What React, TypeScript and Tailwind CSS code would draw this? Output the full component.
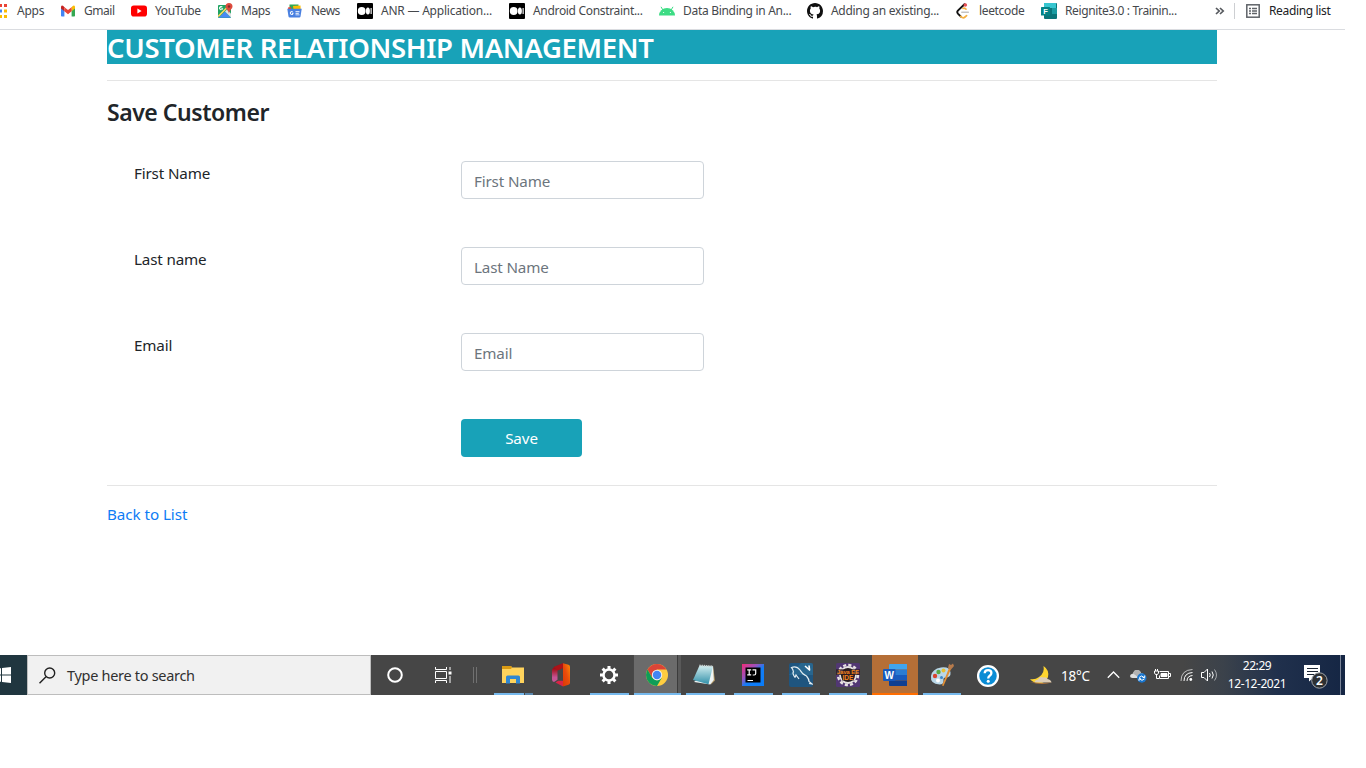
import type { ReactNode } from "react";

function GmailIcon() {
  return (
    <svg width="15" height="12" viewBox="0 0 15 12" className="ml-px">
      <path d="M0 1.500v9.300q0 .7.800.7h2.600V4.600z" fill="#4285f4" />
      <path d="M14 1.500v9.300q0 .7-.8.7h-2.600V4.600z" fill="#34a853" />
      <path d="M0 1.600v1.900l3.400 2.800V2.200L2.300.9Q.6-.1 0 1.600z" fill="#c5221f" />
      <path d="M14 1.600v1.900l-3.400 2.800V2.200l1.100-1.300Q13.400-.1 14 1.600z" fill="#fbbc04" />
      <path d="M3.400 2.200L7 5.100l3.600-2.900v4.100L7 9.300 3.400 6.300z" fill="#ea4335" />
    </svg>
  );
}

function YouTubeIcon() {
  return (
    <svg width="16" height="12" viewBox="0 0 16 12">
      <rect y=".4" width="16" height="11.200" rx="2.800" fill="#f00" />
      <path d="M6.400 3.500v5L10.600 6z" fill="#fff" />
    </svg>
  );
}

function MapsIcon() {
  return (
    <svg width="16" height="16" viewBox="0 0 16 16" className="ml-px">
      <rect x="0" y="2" width="13" height="13" rx="1" fill="#1ea362" />
      <path d="M.5 14.800L7 8.500l6 6.300z" fill="#4a89f3" />
      <path d="M7 8.500l2-2 4 4v4z" fill="#dfe3e4" />
      <path d="M0 12.500L10.500 2h2L.6 14.200z" fill="#ffd75e" />
      <path d="M5.200 5.200H3.300v1h.9a1.100 1.100 0 1 1-.2-1.700l.7-.7a2.100 2.100 0 1 0 .5 1.400z" fill="#fff" />
      <path d="M11 0a3.500 3.500 0 0 0-3.500 3.500c0 2.500 3 3.400 3.500 7.200.5-3.800 3.500-4.700 3.500-7.200A3.500 3.500 0 0 0 11 0z" fill="#dd4b3e" />
      <circle cx="11" cy="3.500" r="1.200" fill="#822f2b" />
    </svg>
  );
}

function NewsIcon() {
  return (
    <svg width="15" height="14" viewBox="0 0 15 14">
      <rect x="2.500" y=".5" width="9" height="6" fill="#34a853" />
      <path d="M6 2l7.500-.4.300 5-7 .6z" fill="#fbbc04" />
      <path d="M1 3.600l3-.5.500 3-3 1z" fill="#ea4335" />
      <path d="M.3 4.800h14.400l-1.200 7.700q-.2 1-1.200 1H2.700q-1 0-1.200-1z" fill="#4a80e0" />
      <path d="M6.600 8.800H5v.9h.6a1 1 0 1 1-.2-1.500l.6-.6a1.900 1.900 0 1 0 .6 1.200zM8.500 7.300h4v1h-4zM8.500 9h3.300v.8H8.500zM8.500 10.500h4v.8h-4z" fill="#fff" />
    </svg>
  );
}

function MediumIcon() {
  return (
    <svg width="16" height="16" viewBox="0 0 16 16">
      <rect width="16" height="16" rx="1" fill="#000" />
      <circle cx="4.700" cy="8" r="3.900" fill="#fff" />
      <ellipse cx="10.900" cy="8" rx="2" ry="3.500" fill="#fff" />
      <rect x="13.500" y="5" width="1.300" height="6" fill="#ddd" />
    </svg>
  );
}

function AndroidIcon() {
  return (
    <svg width="16" height="10" viewBox="0 0 16 10">
      <path d="M0 9.500A8 7.500 0 0 1 16 9.500z" fill="#3ddc84" />
      <path d="M2 .8l2 3.400M14 .8l-2 3.400" stroke="#3ddc84" strokeWidth="1" />
      <circle cx="4.600" cy="6.500" r=".6" fill="#fff" />
      <circle cx="11.400" cy="6.500" r=".6" fill="#fff" />
    </svg>
  );
}

function GithubIcon() {
  return (
    <svg width="16" height="16" viewBox="0 0 16 16">
      <path
        fill="#101010"
        d="M8 0C3.580 0 0 3.580 0 8c0 3.540 2.290 6.530 5.470 7.590.4.070.55-.17.55-.38 0-.19-.01-.82-.01-1.490-2.010.37-2.530-.49-2.690-.94-.09-.23-.48-.94-.82-1.130-.28-.15-.68-.52-.01-.53.63-.01 1.080.58 1.230.82.72 1.210 1.870.87 2.330.66.07-.52.28-.87.51-1.070-1.780-.2-3.640-.89-3.640-3.950 0-.87.31-1.590.82-2.150-.08-.2-.36-1.020.08-2.120 0 0 .67-.21 2.200.82A7.600 7.600 0 0 1 8 3.860c.68 0 1.360.09 2 .27 1.530-1.040 2.200-.82 2.200-.82.44 1.100.16 1.920.08 2.120.51.56.82 1.270.82 2.150 0 3.070-1.870 3.750-3.650 3.950.29.25.54.73.54 1.480 0 1.070-.01 1.930-.01 2.200 0 .21.15.46.55.38A8 8 0 0 0 16 8c0-4.420-3.580-8-8-8z"
      />
    </svg>
  );
}

function LeetcodeIcon() {
  return (
    <svg width="16" height="16" viewBox="0 0 16 16" fill="none" strokeLinecap="round">
      <path d="M9.500 1.200L2.900 7.600q-1.300 1.500 0 3l3 3" stroke="#111" strokeWidth="1.900" />
      <path d="M5.600 13.300q2.300 2.600 4.400.7l1.600-1.400M8 5.400q1.300-.6 3 .8" stroke="#f5b041" strokeWidth="1.700" />
      <path d="M6.800 9.300h6.500" stroke="#c3c3c3" strokeWidth="1.500" />
      <circle cx="10.300" cy="2" r="1.800" fill="#e84f55" />
    </svg>
  );
}

function FormsIcon() {
  return (
    <svg width="16" height="16" viewBox="0 0 16 16">
      <rect x="3" width="13" height="16" rx="1" fill="#0b7478" />
      <path d="M3 0h12v5H3z" fill="#37c6d0" />
      <path d="M11 5h5v6h-5z" fill="#1a9ba1" />
      <rect y="4" width="9" height="8.500" rx=".6" fill="#038387" />
      <text x="2.300" y="11" fontFamily="Liberation Sans" fontWeight="700" fontSize="7.500" fill="#fff">F</text>
    </svg>
  );
}

function ReadingIcon() {
  return (
    <svg width="14" height="14" viewBox="0 0 14 14" fill="none" stroke="#5f6368">
      <rect x=".8" y=".8" width="12.400" height="12.400" strokeWidth="1.500" />
      <path d="M3 4.500h2M3 7h2M3 9.500h2M6 4.500h5M6 7h5M6 9.500h5" strokeWidth="1.300" />
    </svg>
  );
}

type Bookmark = { icon: ReactNode; label: string; width: string; tracking: string };

const bookmarks: Bookmark[] = [
  { icon: <GmailIcon />, label: "Gmail", width: "w-[71px]", tracking: "tracking-[-0.45px]" },
  { icon: <YouTubeIcon />, label: "YouTube", width: "w-[87px]", tracking: "tracking-[-0.4px]" },
  { icon: <MapsIcon />, label: "Maps", width: "w-[69px] -ml-px mr-px", tracking: "tracking-[-0.4px]" },
  { icon: <NewsIcon />, label: "News", width: "w-[70px]", tracking: "tracking-[-0.5px]" },
  { icon: <MediumIcon />, label: "ANR — Application...", width: "w-[152px]", tracking: "tracking-[-0.22px]" },
  { icon: <MediumIcon />, label: "Android Constraint...", width: "w-[150px]", tracking: "tracking-[-0.32px]" },
  { icon: <AndroidIcon />, label: "Data Binding in An...", width: "w-[148px]", tracking: "tracking-[-0.3px]" },
  { icon: <GithubIcon />, label: "Adding an existing...", width: "w-[148px]", tracking: "tracking-[-0.3px]" },
  { icon: <LeetcodeIcon />, label: "leetcode", width: "w-[86px]", tracking: "tracking-[-0.35px]" },
  { icon: <FormsIcon />, label: "Reignite3.0 : Trainin...", width: "w-[174px]", tracking: "tracking-[-0.38px]" },
];

function BookmarkBar() {
  return (
    <nav className="flex h-[30px] w-[1345px] items-start overflow-hidden border-b border-[#dadce0] text-[12px] leading-[22px] whitespace-nowrap text-[#45484c]">
      <div className="flex h-[22px] w-[60px] shrink-0 items-center">
        <svg width="17" height="14" viewBox="0 0 17 14">
          <path d="M0 0h2v3H0zM4 0h3v3H4z" fill="#ea4335" />
          <path d="M0 5.500h2v3H0z" fill="#4285f4" />
          <path d="M4 5.500h3v3H4zM4 11h3v3H4zM0 11h2v3H0z" fill="#fbbc04" />
        </svg>
        <span className="tracking-[-0.25px]">Apps</span>
      </div>
      {bookmarks.map((b) => (
        <a key={b.label} className={`flex h-[22px] shrink-0 items-center ${b.width}`}>
          <span className="flex w-6 shrink-0">{b.icon}</span>
          <span className={b.tracking}>{b.label}</span>
        </a>
      ))}
      <svg className="mt-[7px] shrink-0" width="19" height="9" viewBox="0 0 19 9" fill="none" stroke="#55585d" strokeWidth="1.700">
        <path d="M1 1l3.200 3L1 7M5 1l3.200 3L5 7" />
      </svg>
      <div className="mt-[3px] mr-[11px] h-4 w-px shrink-0 bg-[#cdcfd2]" />
      <div className="flex h-[22px] shrink-0 items-center gap-[9px] text-[#202124]">
        <ReadingIcon />
        <span className="tracking-[-0.35px]">Reading list</span>
      </div>
    </nav>
  );
}

function Field({ label, placeholder }: { label: string; placeholder: string }) {
  return (
    <div className="flex h-[86px] items-start">
      <label className="w-[327px] text-[15.200px] leading-6 tracking-[-0.150px]">{label}</label>
      <input
        placeholder={placeholder}
        className="h-[38px] w-[243px] rounded-[4px] border border-[#ced4da] px-[12px] pt-px text-[15.200px] tracking-[-0.150px] outline-none placeholder:text-[#6c757d]"
      />
    </div>
  );
}

function ExplorerIcon() {
  return (
    <svg width="22" height="20" viewBox="0 0 22 20">
      <path d="M0 1h9l1 1.500h12V18H0z" fill="#ffd35c" />
      <path d="M0 1h9l1 1.500L9 4H0z" fill="#d99a13" />
      <path d="M4 18.500V12q0-1.500 1.500-1.500h11Q18 10.500 18 12v6.500h-4V14H8v4.500z" fill="#3087d2" />
      <path d="M8 14h6v4H8z" fill="#ffd35c" />
    </svg>
  );
}

function OfficeIcon() {
  return (
    <svg width="18" height="24" viewBox="0 0 18 24">
      <defs>
        <linearGradient id="officeArm" x1="0" y1="0" x2="0" y2="1">
          <stop offset=".3" stopColor="#a30f18" />
          <stop offset=".75" stopColor="#c75495" />
        </linearGradient>
        <linearGradient id="officePanel" x1="1" y1="0" x2="0" y2="1">
          <stop offset="0" stopColor="#f98b0b" />
          <stop offset=".5" stopColor="#e84b0c" />
          <stop offset="1" stopColor="#dc3a04" />
        </linearGradient>
      </defs>
      <path d="M0 6.500L2 4l9-3.800v4.900L5.500 7.500v9.300L2 19q-2-.5-2-2.500z" fill="url(#officeArm)" />
      <path d="M2 4l9-3.800v4.900L5.500 7.500z" fill="#ac1318" />
      <path d="M3.500 19.500l2.500-1.700h5v5.700z" fill="#d92446" />
      <path d="M11 .2l5.500 1.600q1.500.5 1.500 2v16q0 1.500-1.500 2L11 23.500z" fill="url(#officePanel)" />
    </svg>
  );
}

function SettingsIcon() {
  return (
    <svg width="20" height="20" viewBox="0 0 20 20" fill="none" stroke="#fff">
      <circle cx="10" cy="10" r="5.500" strokeWidth="2.500" />
      <path d="M10 1v3M10 16v3M1 10h3M16 10h3M3.600 3.600l2.200 2.200M14.200 14.200l2.200 2.200M16.400 3.600l-2.200 2.200M5.800 14.200l-2.200 2.200" strokeWidth="3" />
    </svg>
  );
}

function ChromeIcon() {
  return (
    <svg width="22" height="22" viewBox="0 0 22 22" className="-ml-px">
      <circle cx="11" cy="11" r="11" fill="#ffcd40" />
      <path d="M1.500 5.500A11 11 0 0 1 20.500 5.500H11L6.200 13.700z" fill="#db4437" />
      <path d="M1.500 5.500A11 11 0 0 0 11 22l4.800-8.200L11 16.500l-4.800-2.800z" fill="#0f9d58" />
      <circle cx="11" cy="11" r="5.200" fill="#f1f1f1" />
      <circle cx="11" cy="11" r="4.200" fill="#4285f4" />
    </svg>
  );
}

function NotepadIcon() {
  return (
    <svg width="24" height="24" viewBox="0 0 24 24" className="-ml-0.5">
      <defs>
        <linearGradient id="note" x1="0" y1="0" x2="0" y2="1">
          <stop offset="0" stopColor="#d3eef0" />
          <stop offset="1" stopColor="#3190a9" />
        </linearGradient>
      </defs>
      <path d="M21 2.500l2 15-4 4z" fill="#ad935f" />
      <path d="M21 3l.8 14-3.500 4.500L2 19z" fill="#eef4f4" />
      <path d="M7.500 2.500L21 3.300l-4.500 18L1 17z" fill="url(#note)" />
      <path d="M7.500 2.500l13.500.8" stroke="#c8d1d0" strokeWidth="1.800" strokeDasharray="1.200 1" />
    </svg>
  );
}

function IntellijIcon() {
  return (
    <svg width="22" height="22" viewBox="0 0 22 22">
      <defs>
        <linearGradient id="idea" x1="0" y1="0" x2="1" y2="1">
          <stop offset="0" stopColor="#f32c78" />
          <stop offset=".35" stopColor="#9a52bd" />
          <stop offset=".55" stopColor="#147df5" />
          <stop offset="1" stopColor="#087cfa" />
        </linearGradient>
      </defs>
      <rect width="22" height="22" fill="url(#idea)" />
      <rect x="3.500" y="3.500" width="15" height="15" fill="#000" />
      <path d="M5.200 5.800h4M7.200 5.800v5M5.200 10.800h4M10.500 5.800h3.200v3.700q0 1.500-1.500 1.500h-1.500M5.500 16.500H11" stroke="#fff" strokeWidth="1.200" fill="none" />
    </svg>
  );
}

function MysqlIcon() {
  return (
    <svg width="24" height="24" viewBox="0 0 24 24">
      <rect width="24" height="24" rx="2" fill="#1f557f" />
      <path d="M12 0h10q2 0 2 2v10H0z" fill="#2f7199" opacity=".6" />
      <path d="M6 14.500Q3 10 4.500 9 4 6 2.500 4.500q5-2 8.500 2.500 2.500 4.500 6.500 6 2.500 3 2.500 5.500l3 2.500-3-.5M6 14.500l1-2.500 3 4" stroke="#e3edf2" strokeWidth="1.200" fill="none" />
      <path d="M16 3l5 4.500M20 2.500l.5 4" stroke="#fff" strokeWidth="1.600" />
    </svg>
  );
}

function JavaEeIcon() {
  return (
    <svg width="28" height="24" viewBox="-2 0 28 24">
      <rect width="24" height="24" rx="1.500" fill="#513773" />
      <circle cx="12" cy="12" r="10" fill="none" stroke="#e6e2e2" strokeWidth="2.400" strokeDasharray="3.100 2.136" />
      <circle cx="12" cy="12" r="8" fill="#241c22" stroke="#e6e2e2" strokeWidth="1.800" />
      <path d="M0 6.300h24v5.700H0zM6 12h12v5.500H6z" fill="#2c1c20" opacity=".8" />
      <g fontFamily="Liberation Sans" fontWeight="700" fill="#f5851f">
        <text x="1" y="11.300" fontSize="6" textLength="22" lengthAdjust="spacingAndGlyphs">Java EE</text>
        <text x="6.500" y="17.300" fontSize="6.500" textLength="11" lengthAdjust="spacingAndGlyphs">IDE</text>
      </g>
    </svg>
  );
}

function WordIcon() {
  return (
    <svg width="24" height="22" viewBox="0 0 24 22">
      <path d="M6 1q0-1 1-1h17v5.500H6z" fill="#41a5ee" />
      <path d="M6 5.500h18V11H6z" fill="#2b7cd3" />
      <path d="M6 11h18v5.500H6z" fill="#185abd" />
      <path d="M6 16.500h18V22H7q-1 0-1-1z" fill="#103f91" />
      <rect y="5" width="12.500" height="12" rx="1" fill="#185abd" />
      <text x="1.400" y="14.500" fontFamily="Liberation Sans" fontWeight="700" fontSize="10" fill="#fff">W</text>
    </svg>
  );
}

function PaintIcon() {
  return (
    <svg width="24" height="24" viewBox="0 0 24 24">
      <path d="M1 13Q2 6 11 4.500q9-1 9.500 5 .5 5-5 5-2.500 0-2 3 .5 4-4 4Q0 21 1 13z" fill="#b9d7e8" />
      <circle cx="5" cy="13" r="2.200" fill="#d8432f" />
      <circle cx="8.500" cy="9" r="2.200" fill="#58a943" />
      <circle cx="13.500" cy="7.500" r="2" fill="#e8c034" />
      <circle cx="8" cy="17.500" r="2" fill="#fff" />
      <circle cx="11.500" cy="14.500" r="1.500" fill="#3b87c8" />
      <path d="M19 5l2 1-7.500 17-1.500-.5z" fill="#e28f35" />
      <path d="M18 5l1-4 2 1 2-1.500L24 3l-3 3.500z" fill="#b77b4c" />
    </svg>
  );
}

function HelpIcon() {
  return (
    <svg width="24" height="24" viewBox="0 0 24 24" className="mt-px">
      <circle cx="12" cy="12" r="9.900" fill="#0a8cd5" stroke="#fff" strokeWidth="2.300" />
      <path d="M8.700 9.300q0-3.100 3.400-3.100 3.300 0 3.300 2.800 0 1.500-1.700 2.700-1.500 1.100-1.500 2.700" stroke="#fff" strokeWidth="2.300" fill="none" />
      <circle cx="12.200" cy="17.200" r="1.500" fill="#fff" />
    </svg>
  );
}

type Task = { name: string; icon: ReactNode; cell: string; line: string };

const tasks: Task[] = [
  { name: "office", icon: <OfficeIcon />, cell: "w-12", line: "hidden" },
  { name: "settings", icon: <SettingsIcon />, cell: "w-12", line: "w-[39px] bg-[#76b9ed]" },
  { name: "chrome", icon: <ChromeIcon />, cell: "w-12 border-l border-[#484848] bg-[linear-gradient(90deg,#6b6b6b_43px,#3c3c3c_43px,#3c3c3c_44px,#595959_44px)]", line: "w-full bg-[#76b9ed]" },
  { name: "notepad", icon: <NotepadIcon />, cell: "w-12", line: "w-[39px] bg-[#76b9ed]" },
  { name: "intellij", icon: <IntellijIcon />, cell: "w-12", line: "w-[39px] bg-[#76b9ed]" },
  { name: "mysql", icon: <MysqlIcon />, cell: "w-12", line: "w-[38px] bg-[#76b9ed]" },
  { name: "javaee", icon: <JavaEeIcon />, cell: "w-[47px] pr-px", line: "w-[38px] bg-[#76b9ed]" },
  { name: "word", icon: <WordIcon />, cell: "w-[46px] bg-[#b56f37]", line: "w-full bg-[#ff6d00]" },
  { name: "paint", icon: <PaintIcon />, cell: "w-[47px]", line: "w-[38px] bg-[#76b9ed]" },
  { name: "help", icon: <HelpIcon />, cell: "w-[46px]", line: "hidden" },
];

function TaskButton({ task }: { task: Task }) {
  return (
    <div className={`flex h-10 shrink-0 flex-col items-center ${task.cell}`}>
      <div className="flex h-[38px] items-center pt-0.5">{task.icon}</div>
      <div className={`h-0.5 ${task.line}`} />
    </div>
  );
}

function SystemTray() {
  return (
    <div className="flex h-10 flex-1 items-center pl-[18px] text-white">
      <svg width="24" height="20" viewBox="0 0 24 20" className="shrink-0">
        <path d="M14.500 1q6 4 4.500 11-2 6-9 6-6 0-9-4 5 1 9-2 6-4 4.500-11z" fill="#ffd52e" />
        <path d="M5.500 17.500q0-2.500 3.500-3 1.500-3.500 5.500-2 3-1 4 1.500 3.500.5 4 3.500z" fill="#dccdb8" />
        <path d="M1 17q11 1.500 22 .5-11 3-22-.5z" fill="#b87837" />
      </svg>
      <span className="ml-2 w-[46px] shrink-0 pt-px text-[13.500px] leading-5 tracking-[-0.250px]">18°C</span>
      <svg width="13" height="8" viewBox="0 0 13 8" fill="none" stroke="#fff" strokeWidth="1.300" className="shrink-0">
        <path d="M.8 6.800L6.500 1l5.700 5.800" />
      </svg>
      <svg width="17" height="14" viewBox="0 0 17 14" className="mt-px ml-2.5 shrink-0">
        <path d="M2.500 9Q0 9 0 7t3-2.600Q4 1 7 1t4 3q3 .5 3 5z" fill="#e0e0e0" />
        <path d="M3 4.400Q4 1 7 1t4 3q2 0 3 2L8 8z" fill="#b3b3b3" />
        <circle cx="11.800" cy="9" r="4.700" fill="#1976cf" />
        <path d="M9.100 8.500q2.500-3 5 0M14.700 6.500v2h-2M14.500 9.800q-2.500 3-5 0M9 11.800v-2h2" stroke="#fff" strokeWidth="1" fill="none" />
      </svg>
      <svg width="17" height="12" viewBox="0 0 17 12" fill="none" stroke="#fff" className="ml-[7px] shrink-0">
        <path d="M5.500 2.500h9v7h-9v-3M15 4.500h1.500v3H15M1.500 0v2M3.500 0v2M.5 2h4v2L3.500 5.500h-2L.5 4zM2.500 5.500v4H5" />
        <path d="M7 4.500h6v3H7z" fill="#fff" />
      </svg>
      <svg width="14" height="14" viewBox="0 0 14 14" fill="none" stroke="#fff" className="ml-[9px] shrink-0">
        <path d="M1 13Q1 2 12.500 1.500" opacity=".65" />
        <path d="M4 13Q4 5 12.500 4.500M7 13Q7 8 12.500 7.500" />
        <circle cx="10.800" cy="11.500" r="1.400" fill="#fff" stroke="none" />
      </svg>
      <svg width="17" height="14" viewBox="0 0 17 14" fill="none" stroke="#fff" className="ml-[7px] shrink-0">
        <path d="M.5 4.500H3L6.500 1v12L3 9.500H.5zM8.500 5q1.500 2 0 4M11 3.500q2.500 3.500 0 7" />
        <path d="M13.500 1.500q4 5.500 0 11" opacity=".55" />
      </svg>
      <div className="ml-1 w-[70px] shrink-0 text-center text-[12px] leading-[18px] tracking-[-0.430px]">
        <div>22:29</div>
        <div>12-12-2021</div>
      </div>
      <svg width="26" height="26" viewBox="0 0 26 26" className="mt-1 ml-3 shrink-0">
        <path d="M0 1h16v13H9l-4 3.500V14H0z" fill="#fff" />
        <path d="M3 4.500h11M3 7.500h11M3 10.500h7" stroke="#1c2634" strokeWidth="1.200" />
        <circle cx="15.400" cy="16.500" r="7.700" fill="#2d3033" stroke="#a0a4a9" strokeWidth="1" />
        <text x="12" y="20.800" fontFamily="Noto Sans" fontWeight="600" fontSize="12" fill="#fff">2</text>
      </svg>
      <div className="mr-1 ml-auto h-10 w-px shrink-0 bg-[#7a8498]" />
    </div>
  );
}

function Taskbar() {
  return (
    <footer className="flex h-10 w-[1345px] overflow-hidden bg-[linear-gradient(90deg,#464646_0%,#464646_88%,#3b424b_91%,#20304c_95%,#152644_100%)]">
      <div className="flex w-[27px] shrink-0 items-center bg-[#20363f]">
        <svg width="11" height="16" viewBox="0 0 11 16" fill="#fff">
          <path d="M0 1.300l1-.1v6.300H0zM2 1.100l9-1.100v7.500H2zM0 8.500h1v6.300l-1-.1zM2 8.500h9V16l-9-1.100z" />
        </svg>
      </div>
      <div className="flex w-[344px] shrink-0 items-center border border-[#bdbdbd] bg-[#f1f1f1] pl-[11px] text-[14.500px] text-[#303030]">
        <svg width="17" height="17" viewBox="0 0 17 17" fill="none" stroke="#202020" strokeWidth="1.400">
          <circle cx="10.700" cy="6" r="5" />
          <path d="M7 9.700L.5 16.200" />
        </svg>
        <span className="ml-[11px] pt-px tracking-[-0.3px]">Type here to search</span>
      </div>
      <div className="flex w-12 shrink-0 items-center justify-center">
        <svg width="16" height="16" viewBox="0 0 16 16" fill="none" stroke="#fff" strokeWidth="2">
          <circle cx="8" cy="8" r="6.800" />
        </svg>
      </div>
      <div className="flex w-12 shrink-0 items-center justify-center">
        <svg width="17" height="16" viewBox="0 0 17 16" fill="none" stroke="#fff" className="-mt-px">
          <path d="M.5 0v2.500h11V0M.5 16v-2.500h11V16M.5 4.500h11v7H.5zM15 0v3M15 9v7" />
          <path d="M13.500 4.500h3v3h-3z" fill="#fff" stroke="none" />
        </svg>
      </div>
      <div className="flex w-[22px] shrink-0 items-center gap-0.5 pl-[6px]">
        <div className="h-4 w-px bg-[#707070]" />
        <div className="h-4 w-px bg-[#707070]" />
      </div>
      <div className="flex w-12 shrink-0 flex-col items-center">
        <div className="flex h-[38px] items-center pt-px"><ExplorerIcon /></div>
        <div className="flex h-0.5 w-[39px] gap-px">
          <div className="w-[30px] bg-[#76b9ed]" />
          <div className="flex-1 bg-[#5b88ae]" />
        </div>
      </div>
      {tasks.map((t) => (
        <TaskButton key={t.name} task={t} />
      ))}
      <SystemTray />
    </footer>
  );
}

export default function App() {
  return (
    <div className="flex h-[768px] w-[1366px] flex-col overflow-hidden bg-white font-['Noto_Sans','Open_Sans',sans-serif] text-[#212529]">
      <BookmarkBar />
      <main className="ml-[107px] h-[625px] w-[1110px]">
        <h2 className="h-[34px] bg-[#18a2b8] text-[27.500px] leading-[36px] font-semibold tracking-[-0.330px] whitespace-nowrap text-white">
          CUSTOMER RELATIONSHIP MANAGEMENT
        </h2>
        <hr className="mt-4 border-[#e5e5e5]" />
        <h3 className="mt-[15px] h-8 text-[23px] leading-8 font-semibold tracking-[-0.450px]">Save Customer</h3>
        <form className="mt-[33px] pl-[27px]">
          <Field label="First Name" placeholder="First Name" />
          <Field label="Last name" placeholder="Last Name" />
          <Field label="Email" placeholder="Email" />
          <div className="pl-[327px]">
            <button type="button" className="block h-[38px] w-[121px] rounded-[4px] bg-[#18a2b8] text-[15.200px] tracking-[-0.1px] text-white">
              Save
            </button>
          </div>
        </form>
        <hr className="mt-7 border-[#e5e5e5]" />
        <a className="mt-4 block text-[15.200px] leading-6 tracking-[-0.050px] text-[#0e7cf5]">Back to List</a>
      </main>
      <Taskbar />
    </div>
  );
}
